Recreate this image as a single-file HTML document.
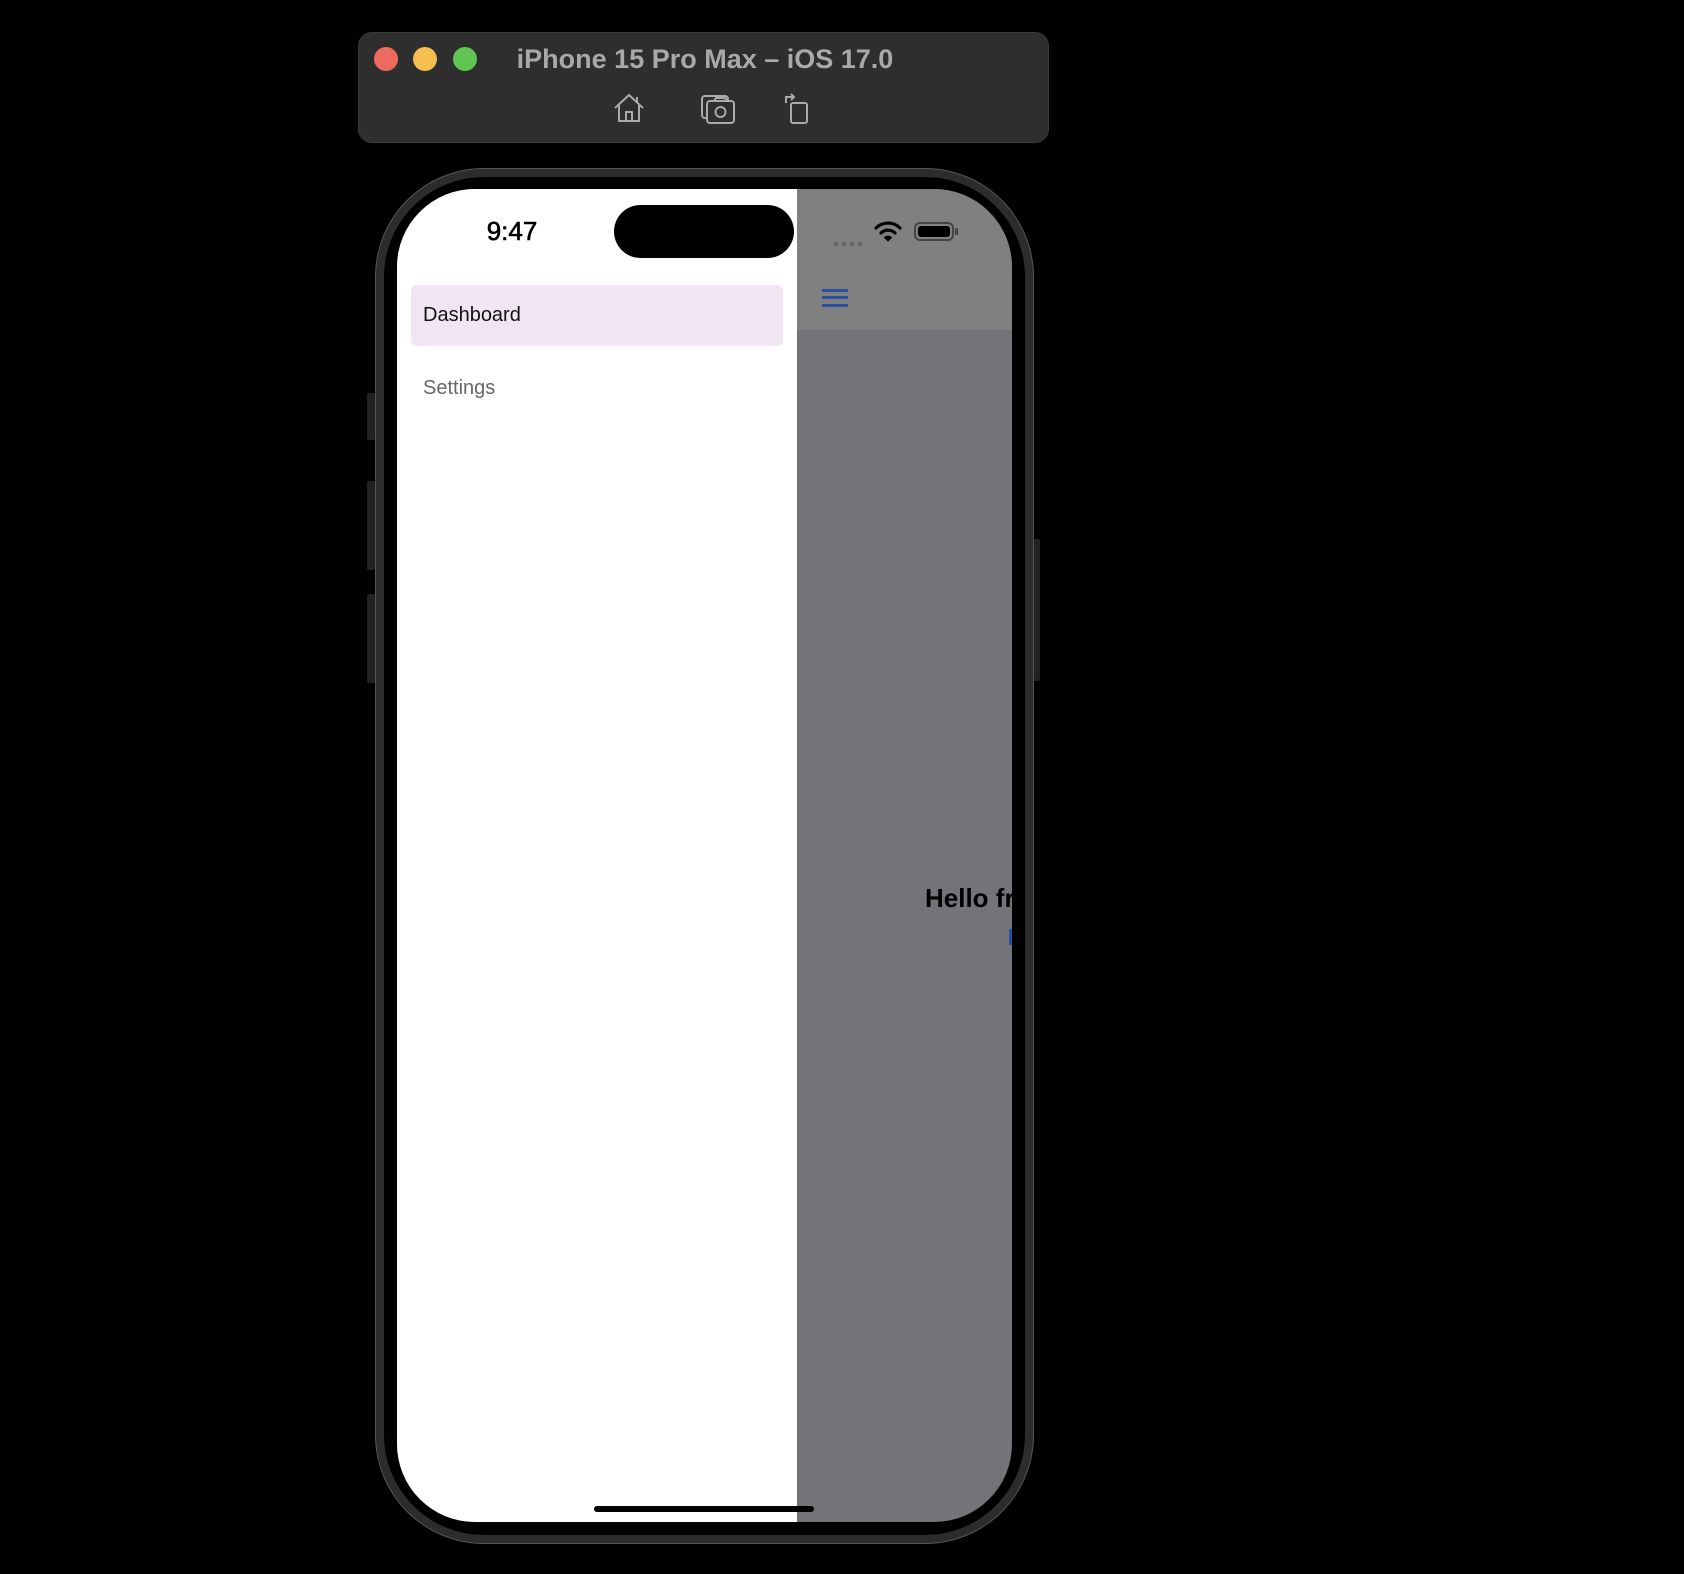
<!DOCTYPE html>
<html><head><meta charset="utf-8"><style>
*{margin:0;padding:0;box-sizing:border-box}
body{width:1684px;height:1574px;background:#000;position:relative;overflow:hidden;font-family:"Liberation Sans",sans-serif}
.abs{position:absolute}
</style></head><body>
<div class="abs" style="left:358px;top:32px;width:691px;height:111px;background:#2e2e2e;border-radius:14px;border:1px solid #3a3a3a"></div>
<div class="abs" style="left:374px;top:47px;width:24px;height:24px;border-radius:50%;background:#ec6a5e"></div>
<div class="abs" style="left:413px;top:47px;width:24px;height:24px;border-radius:50%;background:#f4bf4f"></div>
<div class="abs" style="left:453px;top:47px;width:24px;height:24px;border-radius:50%;background:#61c554"></div>
<div class="abs" style="left:470px;top:42px;width:470px;text-align:center;color:#a9a9a9;font-weight:bold;font-size:27px;line-height:34px">iPhone 15 Pro Max – iOS 17.0</div>
<svg class="abs" style="left:612px;top:92px" width="34" height="32" viewBox="0 0 34 32" fill="none" stroke="#aaa" stroke-width="2"><path d="M3 16L17 3L31 16M7 13V29H27V13M14 29V20H20V29M25 5V10"/></svg>
<svg class="abs" style="left:700px;top:93px" width="36" height="32" viewBox="0 0 36 32" fill="none" stroke="#aaa" stroke-width="2"><rect x="2" y="3" width="26" height="22" rx="3"/><rect x="7" y="8" width="27" height="22" rx="3" fill="#2e2e2e"/><circle cx="20.5" cy="19" r="5"/><path d="M14 8l2-3h9l2 3"/></svg>
<svg class="abs" style="left:782px;top:91px" width="30" height="34" viewBox="0 0 30 34" fill="none" stroke="#aaa" stroke-width="2"><rect x="9" y="12" width="16" height="20" rx="2"/><path d="M4 12V6h8M9 3l3 3-3 3"/></svg>
<div class="abs" style="left:367px;top:393px;width:8px;height:47px;background:#222;border-radius:2px"></div>
<div class="abs" style="left:367px;top:481px;width:8px;height:89px;background:#222;border-radius:2px"></div>
<div class="abs" style="left:367px;top:594px;width:8px;height:89px;background:#222;border-radius:2px"></div>
<div class="abs" style="left:1032px;top:539px;width:8px;height:142px;background:#222;border-radius:2px"></div>
<div class="abs" style="left:376px;top:169px;width:657px;height:1374px;border-radius:108px;background:#000;border:8px solid #2c2c2c;box-shadow:0 0 0 1px #555"></div>
<div class="abs" style="left:397px;top:189px;width:615px;height:1333px;border-radius:78px;overflow:hidden;background:#737478">
  <div class="abs" style="left:0;top:0;width:615px;height:141px;background:#808080"></div>
  <div class="abs" style="left:0;top:0;width:400px;height:1333px;background:#fff"></div>
  <div class="abs" style="left:0;top:27px;width:230px;text-align:center;font-size:26px;color:#000;-webkit-text-stroke:0.6px #000">9:47</div>
  <div class="abs" style="left:217px;top:16px;width:180px;height:53px;border-radius:27px;background:#000"></div>
  <div class="abs" style="left:14px;top:96px;width:372px;height:61px;background:#f1e5f3;border-radius:6px"></div>
  <div class="abs" style="left:26px;top:115px;font-size:20px;color:#111">Dashboard</div>
  <div class="abs" style="left:26px;top:188px;font-size:20px;color:#666">Settings</div>
  <div class="abs" style="left:436px;top:45px"><svg width="32" height="6"><g fill="#6a6a6a"><circle cx="3" cy="3" r="2.5"/><circle cx="11" cy="3" r="2.5"/><circle cx="19" cy="3" r="2.5"/><circle cx="27" cy="3" r="2.5"/></g></svg></div>
  <svg class="abs" style="left:477px;top:31px" width="28" height="22" viewBox="0 0 28 22" fill="none" stroke="#000" stroke-width="3.2" stroke-linecap="round"><path d="M2 8A17 17 0 0 1 26 8"/><path d="M7 13A10 10 0 0 1 21 13"/><path d="M14 21L10.5 17.5A5 5 0 0 1 17.5 17.5Z" fill="#000" stroke-width="1"/></svg>
  <div class="abs" style="left:517px;top:33px;width:40px;height:19px;border:2px solid #444;border-radius:6px;padding:2px"><div style="width:100%;height:100%;background:#000;border-radius:3px"></div></div>
  <div class="abs" style="left:558px;top:39px;width:3px;height:7px;background:#444;border-radius:1px"></div>
  <div class="abs" style="left:425px;top:100px;width:26px;height:3px;background:#2a4ea0"></div>
  <div class="abs" style="left:425px;top:107px;width:26px;height:3px;background:#2a4ea0"></div>
  <div class="abs" style="left:425px;top:115px;width:26px;height:3px;background:#2a4ea0"></div>
  <div class="abs" style="left:528px;top:694px;font-size:26px;font-weight:bold;color:#000;white-space:nowrap">Hello from</div>
  <div class="abs" style="left:612px;top:740px;width:3px;height:16px;background:#2a4ea0"></div>
  <div class="abs" style="left:197px;top:1317px;width:220px;height:6px;border-radius:3px;background:#000"></div>
</div>
</body></html>
